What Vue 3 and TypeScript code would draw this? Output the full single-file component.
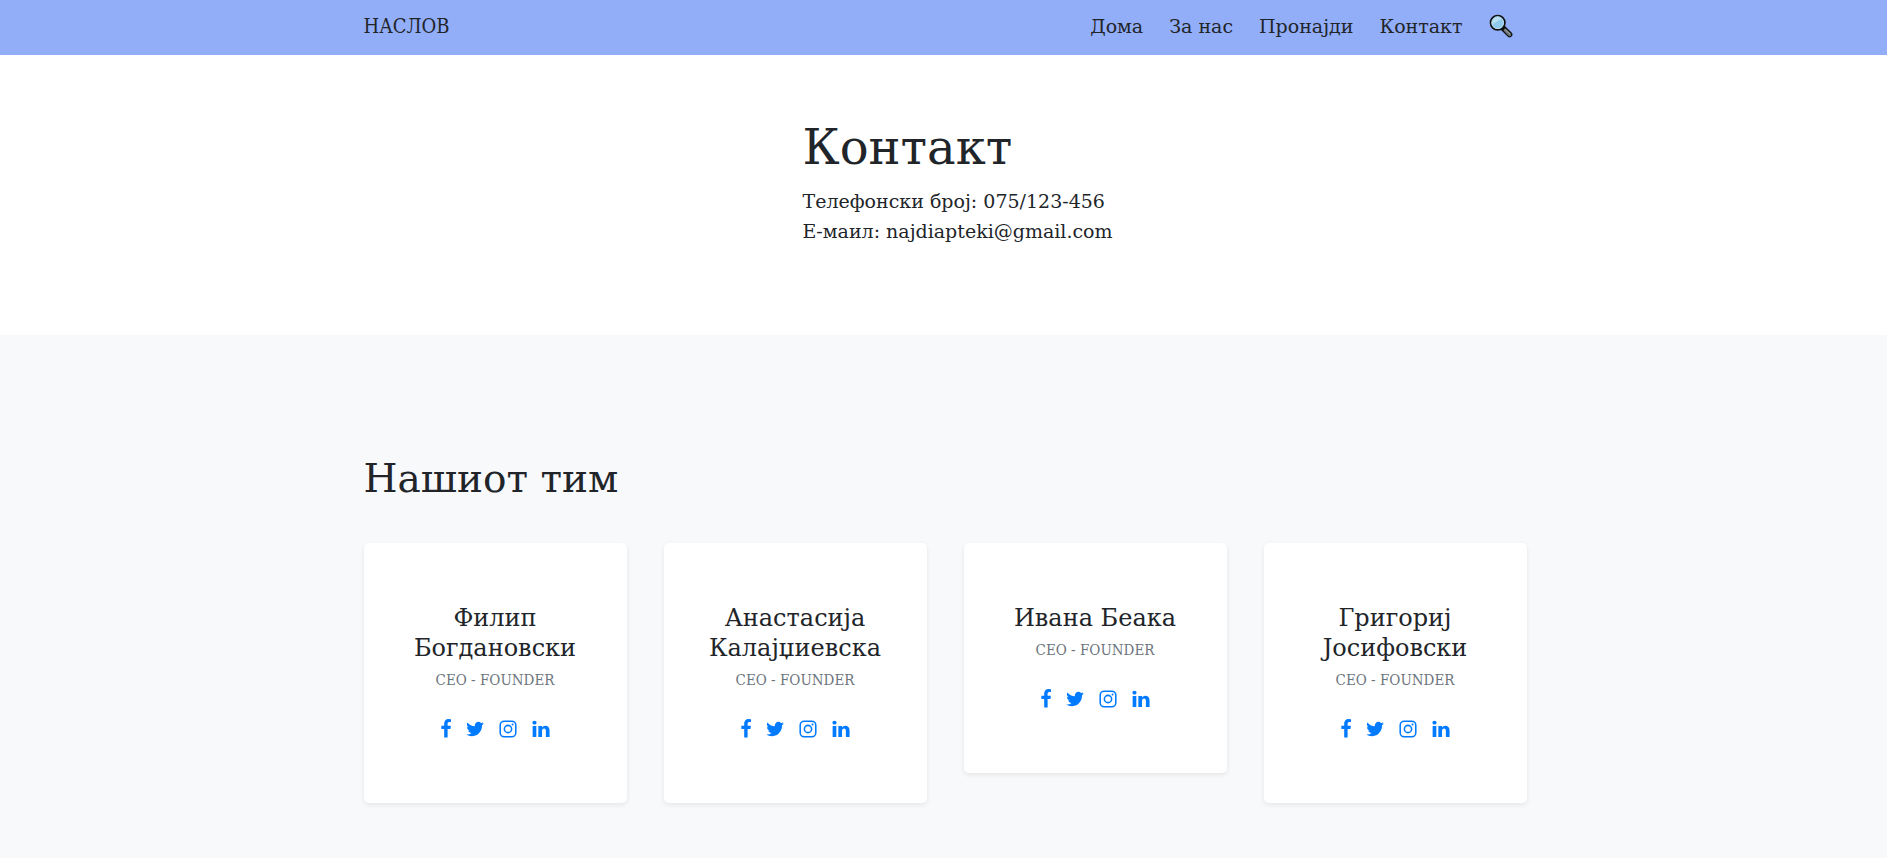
<script setup lang="ts">
interface NavLink {
  label: string
  href: string
}

interface Member {
  name: string
  role: string
}

const navLinks: NavLink[] = [
  { label: 'Дома', href: '#home' },
  { label: 'За нас', href: '#about' },
  { label: 'Пронајди', href: '#find' },
  { label: 'Контакт', href: '#contact' },
]

const members: Member[] = [
  { name: 'Филип Богдановски', role: 'CEO - FOUNDER' },
  { name: 'Анастасија Калајџиевска', role: 'CEO - FOUNDER' },
  { name: 'Ивана Беака', role: 'CEO - FOUNDER' },
  { name: 'Григориј Јосифовски', role: 'CEO - FOUNDER' },
]
</script>

<template>
  <div class="page">
    <header class="topbar">
      <div class="container topbar-inner">
        <a class="brand" href="#home">НАСЛОВ</a>
        <nav class="nav">
          <a v-for="link in navLinks" :key="link.href" class="nav-link" :href="link.href">{{ link.label }}</a>
          <button class="search" type="button" aria-label="Пребарај">
            <svg viewBox="0 0 24 24" width="24" height="24" aria-hidden="true">
              <path d="M14.2 14.2 L20.6 20.6" stroke="#111" stroke-width="5.6" stroke-linecap="round" />
              <path d="M16.2 16.2 L20.6 20.6" stroke="#6f7678" stroke-width="3" stroke-linecap="round" />
              <path d="M16.6 15.7 L20.8 19.9" stroke="#a5abac" stroke-width="1" stroke-linecap="round" />
              <circle cx="8.7" cy="8.7" r="7.2" fill="#8fc9ec" stroke="#111" stroke-width="1.7" />
              <circle cx="8.7" cy="8.7" r="5.8" fill="none" stroke="#b8dcec" stroke-width="1" />
              <path d="M3.6 10.2 A5.4 5.4 0 0 1 12.6 4.8 Z" fill="#b9dff0" />
            </svg>
          </button>
        </nav>
      </div>
    </header>

    <main>
      <section class="contact">
        <h1>Контакт</h1>
        <p>Телефонски број: 075/123-456</p>
        <p>Е-маил: najdiapteki@gmail.com</p>
      </section>

      <section class="team">
        <div class="container">
          <h2>Нашиот тим</h2>
          <div class="cards">
            <article v-for="member in members" :key="member.name" class="card">
              <h3>{{ member.name }}</h3>
              <p class="role">{{ member.role }}</p>
              <div class="social">
                <a href="#facebook" aria-label="Facebook">
                  <svg viewBox="448 0 896 1792" width="10" height="20" aria-hidden="true">
                    <path d="M1343 12v264h-157q-86 0-116 36t-30 108v189h293l-39 296h-254v759h-306v-759h-255v-296h255v-218q0-186 104-288.5t277-102.5q147 0 228 12z" />
                  </svg>
                </a>
                <a href="#twitter" aria-label="Twitter">
                  <svg viewBox="90 0 1613 1792" width="18" height="20" aria-hidden="true">
                    <path d="M1684 408q-67 98-162 167 1 14 1 42 0 130-38 259.5t-115.5 248.5-184.5 210.5-258 146-323 54.5q-271 0-496-145 35 4 78 4 225 0 401-138-105-2-188-64.5t-114-159.5q33 5 61 5 43 0 85-11-112-23-185.5-111.5t-73.5-205.5v-4q68 38 146 41-66-44-105-115t-39-154q0-88 44-163 121 149 294.5 238.5t371.5 99.5q-8-38-8-74 0-134 94.5-228.5t228.5-94.5q140 0 236 102 109-21 205-78-37 115-142 178 93-10 186-50z" />
                  </svg>
                </a>
                <a href="#instagram" aria-label="Instagram">
                  <svg viewBox="90 0 1613 1792" width="18" height="20" aria-hidden="true">
                    <rect x="197" y="197" width="1398" height="1398" rx="360" fill="none" stroke="currentColor" stroke-width="138" />
                    <circle cx="896" cy="896" r="325" fill="none" stroke="currentColor" stroke-width="138" />
                    <circle cx="1306" cy="486" r="92" />
                  </svg>
                </a>
                <a href="#linkedin" aria-label="LinkedIn">
                  <svg viewBox="90 0 1613 1792" width="18" height="20" aria-hidden="true">
                    <path d="M477 625v991h-330v-991h330zm21-306q1 73-50.5 122t-135.5 49h-2q-82 0-132-49t-50-122q0-74 51.5-122.5t134.5-48.5 133 48.5 51 122.5zm1166 729v568h-329v-530q0-105-40.5-164.5t-126.5-59.5q-63 0-105.5 34.5t-63.5 85.5q-11 30-11 81v553h-329q2-399 2-647t-1-296l-1-48h329v144h-2q20-32 41-56t56.5-52 87-43.5 114.5-15.5q171 0 275 113.5t104 332.5z" />
                  </svg>
                </a>
              </div>
            </article>
          </div>
        </div>
      </section>
    </main>
  </div>
</template>

<style>
body {
  margin: 0;
  background: #f8f9fb;
}
</style>

<style scoped>
.page {
  font-family: "Roboto Slab", "DejaVu Serif", serif;
  font-size: 19px;
  line-height: 30px;
  color: #212529;
}

.page *,
.page {
  box-sizing: border-box;
}

h1,
h2,
h3,
p {
  margin: 0;
  font-weight: 400;
}

a {
  color: inherit;
  text-decoration: none;
}

.container {
  max-width: 1200px;
  margin: 0 auto;
  padding: 0 17px 0 20px;
}

.topbar {
  background: #93aef8;
}

.topbar-inner {
  display: flex;
  align-items: center;
  justify-content: space-between;
  padding-top: 11px;
  padding-bottom: 14px;
}

.brand,
.role {
  font-family: "Roboto Slab", "DejaVu Serif Condensed", "DejaVu Serif", serif;
}

.brand {
  font-size: 20px;
}

.nav {
  display: flex;
  align-items: center;
  gap: 26px;
  padding-right: 14px;
}

.search {
  display: flex;
  padding: 0;
  border: 0;
  background: none;
  cursor: pointer;
}

.search svg {
  fill: none;
}

.contact {
  padding: 62px 20px 89px calc(50% - 141px);
  background: #fff;
}

h1 {
  margin-bottom: 9px;
  font-size: 48px;
  line-height: 60px;
}

.team {
  padding: 120px 0 55px;
  background: #f8f9fb;
}

h2 {
  margin-bottom: 40px;
  font-size: 39px;
  line-height: 48px;
}

.cards {
  display: grid;
  grid-template-columns: repeat(auto-fit, minmax(240px, 1fr));
  align-items: start;
  gap: 37px;
}

.card {
  padding: 60px 40px 59px;
  border-radius: 5px;
  background: #fff;
  box-shadow: 0 2px 5px rgba(0, 0, 0, 0.08);
  text-align: center;
}

h3 {
  font-size: 24px;
  line-height: 30px;
}

.role {
  margin: 5px 0 21px;
  font-size: 15px;
  line-height: 25px;
  color: #6c757d;
}

.social {
  display: flex;
  align-items: center;
  justify-content: center;
  gap: 15px;
  height: 30px;
  color: #007bff;
}

.social a {
  display: flex;
}

.social svg {
  fill: currentColor;
}
</style>
